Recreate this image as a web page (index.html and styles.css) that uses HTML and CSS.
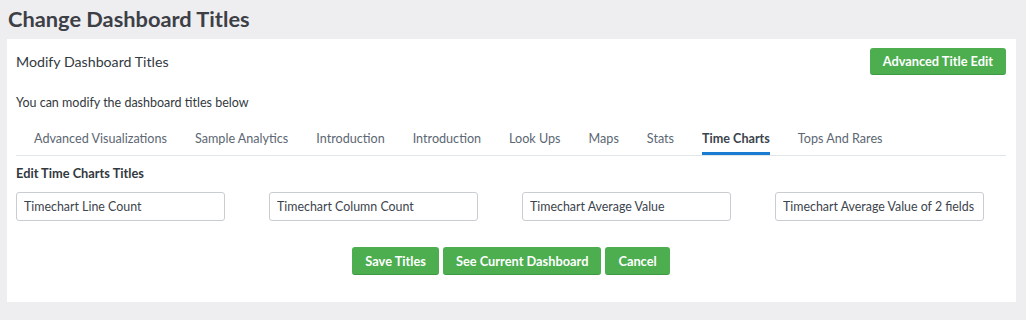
FILE: index.html
```html
<!DOCTYPE html>
<html lang="en">
<head>
  <meta charset="UTF-8" />
  <title>Change Dashboard Titles</title>
  <link rel="stylesheet" href="styles.css">
</head>
<body>

<h1 class="page-title">Change Dashboard Titles</h1>

<div class="panel">
  <div class="panel-head">
    <h2>Modify Dashboard Titles</h2>
    <button class="btn">Advanced Title Edit</button>
  </div>

  <p class="hint">You can modify the dashboard titles below</p>

  <ul class="tabs">
    <li><a>Advanced Visualizations</a></li>
    <li><a>Sample Analytics</a></li>
    <li><a>Introduction</a></li>
    <li><a>Introduction</a></li>
    <li><a>Look Ups</a></li>
    <li><a>Maps</a></li>
    <li><a>Stats</a></li>
    <li class="active"><a>Time Charts</a></li>
    <li><a>Tops And Rares</a></li>
  </ul>

  <h3 class="section-title">Edit Time Charts Titles</h3>
  <div class="fields">
    <input type="text" value="Timechart Line Count">
    <input type="text" value="Timechart Column Count">
    <input type="text" value="Timechart Average Value">
    <input type="text" value="Timechart Average Value of 2 fields">
  </div>

  <div class="actions">
    <button class="btn">Save Titles</button>
    <button class="btn">See Current Dashboard</button>
    <button class="btn">Cancel</button>
  </div>
</div>

</body>
</html>
```

FILE: styles.css
```css
* {
  margin: 0;
  padding: 0;
  box-sizing: border-box;
  font-family: 'Lato', sans-serif;
}

body {
  background-color: #eeedf0;
  color: #3c444d;
  padding: 0 10px 18px 7px;
}

.page-title {
  font-size: 21.8px;
  font-weight: 700;
  line-height: 24px;
  padding: 7px 0 8px 1px;
  color: #3c3f45;
}

.panel {
  background: #ffffff;
  padding: 9px 10px 27px 9px;
}

.panel-head {
  display: flex;
  justify-content: space-between;
  align-items: center;
}

.panel-head h2 {
  font-size: 14.2px;
  font-weight: 400;
  color: #333940;
}

.btn {
  background-color: #4cae4f;
  color: white;
  border: none;
  border-bottom: 1px solid #3e9a42;
  border-radius: 3px;
  font-size: 12.8px;
  font-weight: 700;
  height: 28px;
  padding: 0 13px;
  cursor: pointer;
}

.panel-head .btn {
  height: 27px;
}

.hint {
  font-size: 12.5px;
  line-height: 16px;
  margin-top: 20px;
  color: #333940;
}

.tabs {
  list-style: none;
  display: flex;
  gap: 28px;
  padding-left: 18px;
  margin-top: 11px;
  border-bottom: 1px solid #e1e6eb;
}

.tabs a {
  display: block;
  font-size: 12.6px;
  line-height: 16px;
  padding: 9px 0 5px;
  border-bottom: 3px solid transparent;
  color: #5c6773;
  cursor: pointer;
}

.tabs .active a {
  color: #3c444d;
  font-weight: 700;
  border-bottom-color: #1a7cd0;
}

.section-title {
  font-size: 12.8px;
  font-weight: 700;
  line-height: 16px;
  margin-top: 9px;
  color: #333940;
}

.fields {
  display: flex;
  gap: 44px;
  margin-top: 11px;
}

.fields input {
  width: 209px;
  height: 29px;
  border: 1px solid #c9cdd1;
  border-radius: 3px;
  padding: 0 7px;
  font-size: 12.4px;
  color: #3c444d;
}

.actions {
  display: flex;
  justify-content: center;
  gap: 4px;
  margin-top: 26px;
}
```
